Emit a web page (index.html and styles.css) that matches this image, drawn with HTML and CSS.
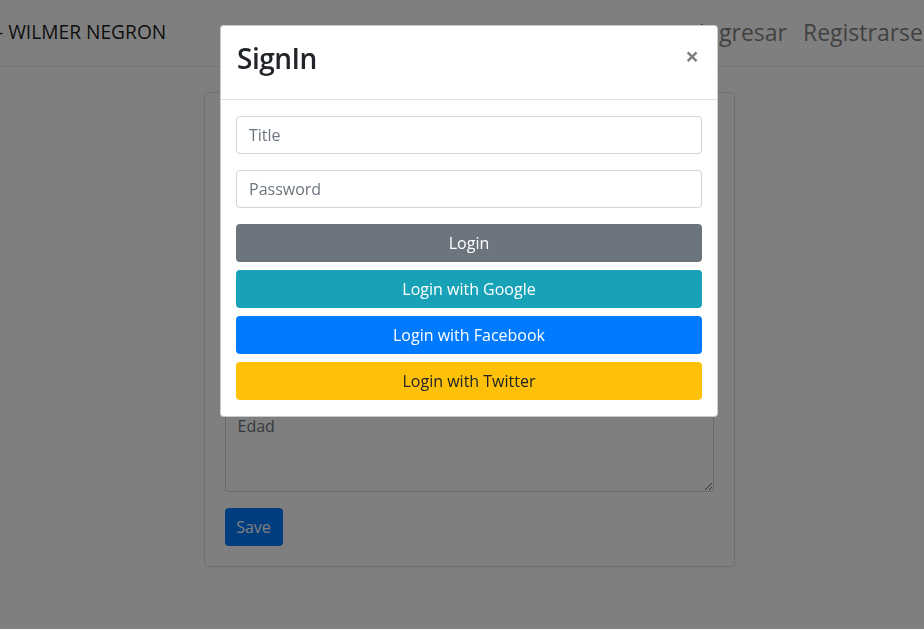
FILE: index.html
```html
<!DOCTYPE html>
<html lang="es">
<head>
<meta charset="utf-8">
<title>SignIn</title>
<link rel="stylesheet" href="styles.css">
</head>
<body>
<div class="page">
  <nav class="navbar">
    <a class="brand" href="#">- WILMER NEGRON</a>
    <ul class="nav">
      <li><a class="nav-link" href="#">Ingresar</a></li>
      <li><a class="nav-link" href="#">Registrarse</a></li>
    </ul>
  </nav>
  <main class="main">
    <div class="card">
      <form class="card-body">
        <div class="group"><input class="field" placeholder="Nombre"></div>
        <div class="group"><input class="field" placeholder="Apellido"></div>
        <div class="group"><input class="field" placeholder="Correo"></div>
        <div class="group"><input class="field" placeholder="Telefono"></div>
        <div class="group"><textarea class="field area-sm" placeholder="Direccion"></textarea></div>
        <div class="group"><textarea class="field area" placeholder="Edad"></textarea></div>
        <button type="button" class="btn save">Save</button>
      </form>
    </div>
  </main>
</div>
<div class="backdrop"></div>
<div class="modal">
  <div class="dialog">
    <div class="modal-header">
      <h2 class="modal-title">SignIn</h2>
      <button type="button" class="close">×</button>
    </div>
    <div class="modal-body">
      <input class="field m-field" placeholder="Title">
      <input class="field m-field" type="password" placeholder="Password">
      <div class="btns">
        <button type="button" class="btn block gray">Login</button>
        <button type="button" class="btn block teal">Login with Google</button>
        <button type="button" class="btn block blue">Login with Facebook</button>
        <button type="button" class="btn block yellow">Login with Twitter</button>
      </div>
    </div>
  </div>
</div>
</body>
</html>
```
FILE: styles.css
```css
* { box-sizing: border-box; }
html, body {
  margin: 0;
  overflow: hidden;
  height: 100%;
}
body {
  font-family: "Open Sans", "Noto Sans", sans-serif;
  font-size: 16px;
  line-height: 1.5;
  color: #212529;
  background: #fff;
}
.page {
  width: 938px;
}
.navbar {
  display: flex;
  align-items: center;
  justify-content: space-between;
  height: 67px;
  border-bottom: 1px solid #e6e6e6;
}
.brand {
  margin-left: -3px;
  font-size: 19.2px;
  color: rgba(0,0,0,.9);
  text-decoration: none;
  white-space: nowrap;
  margin-top: -2px;
}
.nav {
  display: flex;
  list-style: none;
  margin: 0;
  padding: 0 7px 0 0;
}
.nav-link {
  display: block;
  padding: 0 8px;
  font-size: 23px;
  color: rgba(0,0,0,.5);
  text-decoration: none;
  margin-top: -2px;
}
.main {
  padding-top: 25px;
}
.card {
  width: 531px;
  margin: 0 auto;
  border: 1px solid rgba(0,0,0,.125);
  border-radius: 4px;
}
.card-body {
  padding: 20px;
}
.group {
  margin-bottom: 16px;
}
.field {
  display: block;
  width: 100%;
  height: 38px;
  padding: 6px 12px;
  font-family: inherit;
  font-size: 16px;
  line-height: 1.5;
  color: #495057;
  background: #fff;
  border: 1px solid #ced4da;
  border-radius: 4px;
}
.field::placeholder { color: #6c757d; }
.area-sm {
  height: 62px;
  resize: vertical;
}
.area {
  height: 85px;
  resize: vertical;
}
.btn {
  display: block;
  font-family: inherit;
  font-size: 16px;
  line-height: 1.5;
  padding: 6px 12px;
  height: 38px;
  border: 1px solid transparent;
  border-radius: 4px;
  color: #fff;
  cursor: pointer;
}
.save {
  background: #007bff;
  width: 58px;
  padding: 6px 0;
}
.backdrop {
  position: fixed;
  inset: 0;
  background: rgba(0,0,0,.5);
}
.modal {
  position: fixed;
  top: 0;
  left: 0;
  width: 938px;
}
.dialog {
  width: 498px;
  margin: 25px auto 0;
  background: #fff;
  border: 1px solid rgba(0,0,0,.2);
  border-radius: 4px;
}
.modal-header {
  display: flex;
  align-items: flex-start;
  justify-content: space-between;
  padding: 16px;
  border-bottom: 1px solid #dee2e6;
}
.modal-title {
  margin: 0 0 8px;
  font-size: 28px;
  font-weight: 600;
  letter-spacing: -0.5px;
  line-height: 33px;
  color: #212529;
}
.close {
  background: transparent;
  border: 0;
  padding: 0;
  margin: 2px 2px 0 0;
  font-family: inherit;
  font-size: 24px;
  font-weight: 700;
  line-height: 1;
  color: #000;
  opacity: .5;
  text-shadow: 0 1px 0 #fff;
  cursor: pointer;
}
.modal-body {
  padding: 16px 15px;
}
.m-field {
  margin-bottom: 16px;
}
.btns {
  display: flex;
  flex-direction: column;
  gap: 8px;
}
.block { width: 100%; }
.gray { background: #6c757d; }
.teal { background: #17a2b8; }
.blue { background: #007bff; }
.yellow { background: #ffc107; color: #212529; }
```
